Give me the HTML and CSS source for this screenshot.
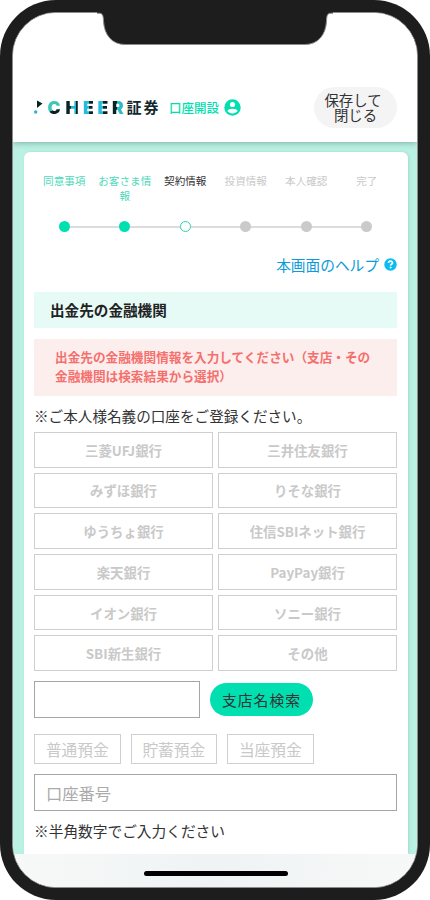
FILE: index.html
```html
<!DOCTYPE html>
<html lang="ja">
<head>
<meta charset="utf-8">
<title>CHEER証券 口座開設</title>
<link rel="stylesheet" href="styles.css">
</head>
<body>
<div class="phone">
  <div class="screen">
    <header class="header">
      <div class="logo">
        <svg class="flag" width="11" height="15" viewBox="0 0 11 15"><path d="M3 .5 L8.5 3.6 L3 8Z" fill="#082225"/><circle cx="1.7" cy="12" r="1.7" fill="#24b4e5"/></svg>
        <span class="cheer"><span class="c">C</span><span class="h">H</span><span class="e">E</span><span class="e">E</span><span class="r">R</span></span>
        <span class="sec">証券</span>
      </div>
      <div class="opening">口座開設</div>
      <svg class="user" width="17" height="17" viewBox="0 0 17 17"><circle cx="8.5" cy="8.5" r="8.2" fill="#00dfb0"/><circle cx="8.5" cy="5.5" r="2.6" fill="#fff"/><path d="M3.3 12.1C3.8 8.8 13.2 8.8 13.7 12.1C11.2 15.4 5.8 15.4 3.3 12.1Z" fill="#fff"/></svg>
      <button class="save"><span>保存して</span><span class="close">閉じる</span></button>
    </header>
    <main class="body">
      <section class="card">
        <ol class="steps">
          <li class="step done"><span class="label">同意事項</span><i class="dot"></i></li>
          <li class="step done"><span class="label">お客さま情報</span><i class="dot"></i></li>
          <li class="step current"><span class="label">契約情報</span><i class="dot"></i></li>
          <li class="step"><span class="label">投資情報</span><i class="dot"></i></li>
          <li class="step"><span class="label">本人確認</span><i class="dot"></i></li>
          <li class="step"><span class="label">完了</span><i class="dot"></i></li>
        </ol>
        <a class="help">本画面のヘルプ<svg width="13" height="13" viewBox="0 0 13 13"><circle cx="6.5" cy="6.5" r="6.2" fill="#08bdf2"/><path d="M4.5 5C4.6 2.5 8.6 2.5 8.5 4.9C8.4 6.3 6.6 6.3 6.6 7.6" fill="none" stroke="#fff" stroke-width="1.7"/><circle cx="6.6" cy="9.6" r="1" fill="#fff"/></svg></a>
        <h2 class="title">出金先の金融機関</h2>
        <p class="error">出金先の金融機関情報を入力してください（支店・その<br>金融機関は検索結果から選択）</p>
        <p class="note">※ご本人様名義の口座をご登録ください。</p>
        <div class="banks">
          <button>三菱UFJ銀行</button><button>三井住友銀行</button>
          <button>みずほ銀行</button><button>りそな銀行</button>
          <button>ゆうちょ銀行</button><button>住信SBIネット銀行</button>
          <button>楽天銀行</button><button>PayPay銀行</button>
          <button>イオン銀行</button><button>ソニー銀行</button>
          <button>SBI新生銀行</button><button>その他</button>
        </div>
        <div class="branch"><div class="field"></div><button class="search">支店名検索</button></div>
        <div class="types"><button>普通預金</button><button>貯蓄預金</button><button>当座預金</button></div>
        <div class="number">口座番号</div>
        <p class="hint">※半角数字でご入力ください</p>
      </section>
    </main>
    <footer class="home"><div class="bar"></div></footer>
  </div>
  <svg class="notch" width="236" height="34" viewBox="0 0 236 34"><path d="M0 0H236V1.2H234C230 1.2 229.8 4 229.5 9C228.8 23 221 32.5 208 32.5H28C15 32.5 7.2 23 6.5 9C6.2 4 6 1.2 2 1.2H0Z" fill="#1d1d1d"/><path d="M0 1.2H2C6 1.2 6.2 4 6.5 9C7.2 23 15 32.5 28 32.5H208C221 32.5 228.8 23 229.5 9C229.8 4 230 1.2 234 1.2H236" fill="none" stroke="#8c8c8c" stroke-width="1"/></svg>
</div>
</body>
</html>
```
FILE: styles.css
```css
* { box-sizing: border-box; }
body { margin: 0; background: #fff; font-family: "Noto Sans CJK JP", sans-serif; color: #333; }
button { font: inherit; color: inherit; background: #fff; border: 0; padding: 0; margin: 0; white-space: nowrap; }
p, h2, ol { margin: 0; padding: 0; }

.phone { position: relative; width: 430px; height: 900px; padding: 12px; background: #1d1d1d; border-radius: 56px; overflow: hidden; }
.screen { width: 406px; height: 876px; border: 1px solid #8c8c8c; border-radius: 44px; overflow: hidden; background: #fff; display: flex; flex-direction: column; }
.notch { position: absolute; left: 97px; top: 12px; }

.header { position: relative; flex: none; height: 129px; padding: 60px 20px 0 21px; display: flex; align-items: center; background: #fff; box-shadow: 0 1px 6px rgba(0, 60, 45, .35); }
.logo { display: flex; align-items: center; width: 135px; height: 20px; }
.flag { flex: none; }
.cheer { flex: none; display: flex; width: 78px; margin-left: 2.5px; font: 900 17.5px/20px Inter, sans-serif; }
.cheer span { flex: none; color: transparent; background-clip: text; -webkit-background-clip: text; }
.cheer .c { width: 18px; background-image: linear-gradient(155deg, #3cc8b4 50%, #082225 52%); }
.cheer .h { width: 17.5px; background-image: linear-gradient(90deg, #082225 32%, #24b4d5 32%, #24b4d5 56%, #082225 56%); }
.cheer .e { width: 14.5px; background-image: linear-gradient(90deg, #24bddd 38%, #082225 39%); }
.cheer .r { width: 13px; background-image: linear-gradient(90deg, #082225 40%, #2cbcc8 41%); }
.sec { margin-left: 1px; font-size: 15px; line-height: 20px; font-weight: 700; letter-spacing: 2px; color: #12282b; white-space: nowrap; transform: translateY(-1px); }
.opening { width: 54px; font-size: 12.5px; line-height: 20px; font-weight: 500; color: #00dfb0; white-space: nowrap; }
.user { flex: none; margin-left: 1px; }
.save { display: flex; flex-direction: column; align-items: center; width: 83px; height: 41px; padding: 6px 5px 0 0; margin-left: auto; border-radius: 21px; background: #f4f4f4; font-size: 14.4px; line-height: 14.6px; }
.close { padding-left: 5px; }

.body { flex: 1; min-height: 0; background: #bbf1e3; padding: 10px 9.5px 0 10.5px; display: flex; }
.card { flex: 1; min-width: 0; background: #fff; border-radius: 6px 6px 0 0; padding: 21px 10.5px 0 10.5px; box-shadow: 1px 0 3px rgba(0, 60, 45, .12); }

.steps { list-style: none; display: grid; grid-template-columns: repeat(6, 1fr); height: 59px; }
.step { position: relative; display: flex; flex-direction: column; justify-content: space-between; align-items: center; color: #c9c9c9; }
.label { width: 54px; font-size: 10.6px; line-height: 15px; text-align: center; }
.dot { width: 11px; height: 11px; border-radius: 50%; background: #cacaca; position: relative; z-index: 1; }
.step:not(:last-child)::after { content: ""; position: absolute; left: 50%; width: 100%; bottom: 4.5px; height: 1.5px; background: #dcdcdc; }
.done { color: #4ed9bb; }
.done .dot { background: #00dfb0; }
.current { color: #333; }
.current .dot { background: #fff; border: 1px solid #2fd3b0; }

.help { display: flex; justify-content: flex-end; align-items: center; gap: 5px; margin-top: 21px; height: 22px; font-size: 14.7px; color: #0c9bd8; }
.title { margin-top: 17px; height: 36px; padding-left: 16px; background: #e6faf6; font-size: 14.6px; line-height: 36px; font-weight: 700; color: #222; }
.error { margin-top: 10.5px; height: 57px; padding: 9.5px 0 0 21px; background: #fdeeee; font-size: 12.65px; line-height: 18.5px; font-weight: 700; color: #f4706c; white-space: nowrap; }
.note { margin-top: 9px; height: 22px; font-size: 14.6px; line-height: 22px; white-space: nowrap; }
.banks { display: grid; grid-template-columns: 1fr 1fr; grid-auto-rows: 35.6px; gap: 5.1px 5px; margin-top: 5.5px; }
.banks button { border: 1px solid #cfcfcf; font-size: 13.4px; font-weight: 700; color: #c9c9c9; }
.branch { display: flex; align-items: center; gap: 10px; margin-top: 10px; }
.field { width: 166px; height: 37px; border: 1px solid #a5a5a5; }
.search { width: 103px; height: 33px; border-radius: 17px; background: #00dfb0; font-size: 14.8px; letter-spacing: 1px; }
.types { display: flex; gap: 10px; margin-top: 16px; }
.types button { width: 86.5px; height: 30px; border: 1px solid #cfcfcf; font-size: 15.7px; color: #c9c9c9; }
.number { margin-top: 10px; height: 37px; padding-left: 11px; border: 1px solid #a5a5a5; font-size: 16.3px; line-height: 36px; color: #aaa; }
.hint { margin-top: 10px; font-size: 14.7px; line-height: 20px; white-space: nowrap; }

.home { flex: none; height: 33px; background: linear-gradient(100deg, #f7f9f9, #f0f3f3 50%, #f7f9f9); padding: 17px 0 0 131px; }
.bar { width: 144px; height: 5px; border-radius: 3px; background: #000; }
```
